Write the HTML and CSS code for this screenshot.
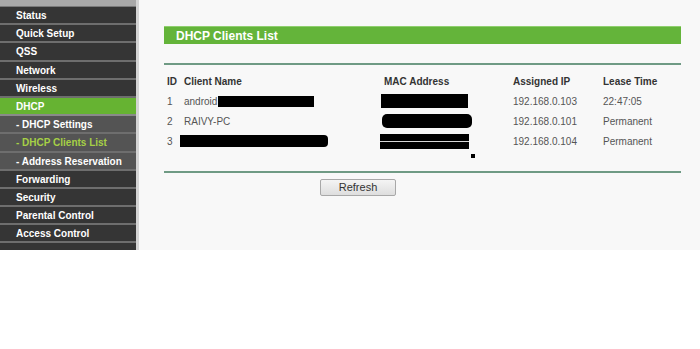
FILE: index.html
```html
<!DOCTYPE html>
<html lang="en">

<head>
    <meta charset="UTF-8">
    <title>DHCP Clients List</title>
    <link rel="stylesheet" href="styles.css">
</head>

<body>

    <div class="frame">
        <div class="menu">
            <div class="menu-top"></div>
            <a class="item">Status</a>
            <a class="item">Quick Setup</a>
            <a class="item">QSS</a>
            <a class="item">Network</a>
            <a class="item">Wireless</a>
            <a class="item active">DHCP</a>
            <a class="item sub">- DHCP Settings</a>
            <a class="item sub current">- DHCP Clients List</a>
            <a class="item sub">- Address Reservation</a>
            <a class="item">Forwarding</a>
            <a class="item">Security</a>
            <a class="item">Parental Control</a>
            <a class="item">Access Control</a>
        </div>

        <div class="main">
            <div class="title">DHCP Clients List</div>
            <div class="rule"></div>

            <div class="clients">
                <div class="row head">
                    <span>ID</span>
                    <span>Client Name</span>
                    <span>MAC Address</span>
                    <span>Assigned IP</span>
                    <span>Lease Time</span>
                </div>
                <div class="row">
                    <span>1</span>
                    <span>android<i class="blot name-1"></i></span>
                    <span><i class="blot mac-1"></i></span>
                    <span>192.168.0.103</span>
                    <span>22:47:05</span>
                </div>
                <div class="row">
                    <span>2</span>
                    <span>RAIVY-PC</span>
                    <span><i class="blot mac-2"></i></span>
                    <span>192.168.0.101</span>
                    <span>Permanent</span>
                </div>
                <div class="row">
                    <span>3</span>
                    <span><i class="blot name-3"></i></span>
                    <span><i class="blot mac-3"></i></span>
                    <span>192.168.0.104</span>
                    <span>Permanent</span>
                </div>
                <div class="row dot-row">
                    <span></span>
                    <span></span>
                    <span><i class="dot"></i></span>
                </div>
            </div>

            <div class="rule bottom"></div>

            <div class="actions">
                <button class="btn">Refresh</button>
            </div>
        </div>
    </div>

</body>

</html>
```

FILE: styles.css
```css
body {
    margin: 0;
    background-color: #fff;
    font-family: 'Liberation Sans', Arial, sans-serif;
}

.frame {
    display: flex;
    height: 250px;
    background-color: #f8f8f8;
}

/* left menu */
.menu {
    width: 136px;
    background-color: #353535;
    border-right: 3px solid #d4d4d4;
    display: flex;
    flex-direction: column;
}

.menu-top {
    height: 6px;
    background-color: #a9a9a9;
    border-bottom: 1px solid #7a7a7a;
}

.item {
    display: block;
    height: 16.2px;
    line-height: 18px;
    padding-left: 16px;
    border-bottom: 2px solid #6e6e6e;
    color: #fff;
    font-size: 10px;
    font-weight: bold;
}

.item.active {
    background-color: #66b332;
    border-bottom-color: #8a8a8a;
}

.item.sub {
    background-color: #545454;
}

.item.current {
    color: #a6d046;
}

/* content */
.main {
    width: 517px;
    padding: 26px 0 0 25px;
}

.title {
    height: 17px;
    line-height: 18px;
    background-color: #64b43a;
    border-top: 1px solid #8fcf6e;
    color: #fff;
    font-size: 12px;
    font-weight: bold;
    padding-left: 12px;
}

.rule {
    height: 2px;
    margin-top: 19px;
    background-color: #6f9a84;
}

.rule.bottom {
    margin-top: 10px;
}

.clients {
    margin-top: 6px;
    font-size: 10px;
    color: #555;
}

.row {
    display: grid;
    grid-template-columns: 17px 200px 129px 90px 78px;
    height: 20px;
    align-items: center;
    padding-left: 3px;
}

.row.head {
    color: #333;
    font-weight: bold;
}

.row span {
    display: flex;
    align-items: center;
}

.blot {
    display: inline-block;
    background-color: #000;
}

.name-1 {
    width: 96px;
    height: 11px;
    margin-left: 1px;
}

.mac-1 {
    width: 87px;
    height: 14px;
    margin-left: -3px;
}

.mac-2 {
    width: 90px;
    height: 14px;
    margin-left: -2px;
    border-radius: 5px;
}

.name-3 {
    width: 148px;
    height: 12px;
    margin-left: -4px;
    border-radius: 0 4px 4px 0;
}

.mac-3 {
    width: 89px;
    height: 15px;
    margin-left: -4px;
    background-image: linear-gradient(#000 7px, #d8d8d8 7px, #d8d8d8 8px, #000 8px);
}

.dot-row {
    height: 10px;
}

.dot {
    display: inline-block;
    width: 4px;
    height: 4px;
    background-color: #000;
    margin-left: 87px;
}

.actions {
    padding-left: 156px;
    margin-top: 4px;
}

.btn {
    width: 76px;
    height: 17px;
    padding: 0;
    font-family: 'Liberation Sans', Arial, sans-serif;
    font-size: 11px;
    color: #333;
    background: linear-gradient(#f4f4f4, #dedede);
    border: 1px solid #a8a8a8;
    border-radius: 2px;
}
```
